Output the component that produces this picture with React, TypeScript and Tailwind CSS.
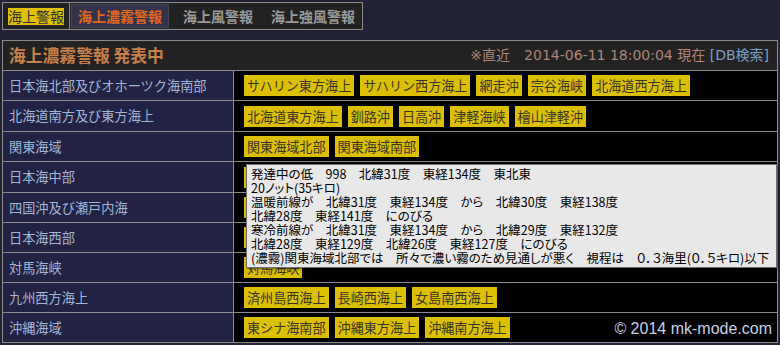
const rows: { name: string; tags: string[]; tall?: boolean }[] = [
  { name: "日本海北部及びオホーツク海南部", tags: ["サハリン東方海上", "サハリン西方海上", "網走沖", "宗谷海峡", "北海道西方海上"] },
  { name: "北海道南方及び東方海上", tags: ["北海道東方海上", "釧路沖", "日高沖", "津軽海峡", "檜山津軽沖"], tall: true },
  { name: "関東海域", tags: ["関東海域北部", "関東海域南部"] },
  { name: "日本海中部", tags: ["佐渡島付近", "能登半島沖"], tall: true },
  { name: "四国沖及び瀬戸内海", tags: ["四国沖", "瀬戸内海"] },
  { name: "日本海西部", tags: ["山陰沖", "若狭湾"] },
  { name: "対馬海峡", tags: ["対馬海峡"] },
  { name: "九州西方海上", tags: ["済州島西海上", "長崎西海上", "女島南西海上"] },
  { name: "沖縄海域", tags: ["東シナ海南部", "沖縄東方海上", "沖縄南方海上"] },
];

const tooltip = [
  "発達中の低　998　北緯31度　東経134度　東北東",
  "20ノット(35キロ)",
  "温暖前線が　北緯31度　東経134度　から　北緯30度　東経138度",
  "北緯28度　東経141度　にのびる",
  "寒冷前線が　北緯31度　東経134度　から　北緯29度　東経132度",
  "北緯28度　東経129度　北緯26度　東経127度　にのびる",
  "(濃霧)関東海域北部では　所々で濃い霧のため見通しが悪く　視程は　０．３海里(０．５キロ)以下",
];

export default function App() {
  return (
    <div className="relative w-[780px] h-[345px] overflow-hidden bg-[#222236] pt-[2px] pl-[2px] font-['Noto_Sans_CJK_JP',sans-serif]">
      {/* tabs */}
      <div className="flex h-[28px] w-fit items-center border border-[#8a8a8a] bg-[#222222] text-[14px] leading-[17px]">
        <div className="flex h-full items-center border-r border-[#8a8a8a] pl-[5px] pr-[5px]">
          <span className="bg-[#e0c000] text-[#333333]">海上警報</span>
        </div>
        <span className="ml-[1px] flex h-[24px] items-center border border-[#45455a] bg-[#33334a] px-[6px] font-bold text-[#e2661f]">
          海上濃霧警報
        </span>
        <span className="ml-[5px] px-[9px] font-bold text-[#9a9a9a]">海上風警報</span>
        <span className="pl-[9px] pr-[7px] font-bold text-[#9a9a9a]">海上強風警報</span>
      </div>

      {/* table */}
      <div className="mt-[10px] w-[776px] border border-[#8a8a8a]">
        <div className="flex h-[29px] items-center justify-between bg-[#222222] pl-[6px] pr-[8px]">
          <span className="text-[16.8px] font-bold text-[#c8804a]">海上濃霧警報 発表中</span>
          <span className="font-['DejaVu_Sans','Noto_Sans_CJK_JP',sans-serif] text-[14px] text-[#b08478]">
            ※直近　2014-06-11 18:00:04 現在 <span className="text-[#7b9fc9]">[DB検索]</span>
          </span>
        </div>
        {rows.map((r) => (
          <div key={r.name} className={`grid grid-cols-[231px_1fr] border-t border-[#8a8a8a] ${r.tall ? "h-[31px]" : "h-[30px]"}`}>
            <div className="flex items-center border-r border-[#8a8a8a] bg-[#222244] pl-[6px] text-[13.2px] text-[#a2b6d6]">
              {r.name}
            </div>
            <div className="flex items-center gap-[6px] bg-black pl-[10px]">
              {r.tags.map((t) => (
                <span key={t} className="h-[21px] bg-[#dcbf00] px-[3px] text-[13.1px] leading-[21px] text-[#3a3626]">
                  {t}
                </span>
              ))}
            </div>
          </div>
        ))}
      </div>

      {/* hover tooltip */}
      <div className="absolute left-[246px] top-[164px] w-[531px] border border-[#6e6e6e] bg-[#e8e8e8] px-[4px] py-[2px] text-[12.5px] leading-[14px] text-black [font-feature-settings:'palt'] shadow-[1px_1px_2px_rgba(0,0,0,0.5)]">
        {tooltip.map((l) => (
          <div key={l} className="whitespace-nowrap">{l}</div>
        ))}
      </div>

      <div className="absolute bottom-[7px] right-[8px] font-['Liberation_Sans',sans-serif] text-[16px] leading-[18px] text-[#c4d0e4]">
        © 2014 mk-mode.com
      </div>
    </div>
  );
}
